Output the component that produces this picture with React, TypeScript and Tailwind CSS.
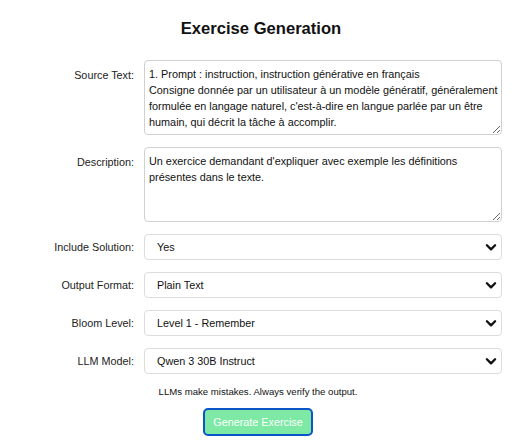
import React from "react";

const Chevron = () => (
  <svg
    className="pointer-events-none absolute right-[3px] top-1/2 -translate-y-1/2"
    width="14"
    height="14"
    viewBox="0 0 24 24"
    fill="none"
    stroke="#111"
    strokeWidth="4"
    strokeLinecap="round"
    strokeLinejoin="round"
  >
    <path d="M5 9l7 7 7-7" />
  </svg>
);

function SelectRow({ label, value }: { label: string; value: string }) {
  return (
    <div className="flex items-center">
      <label className="w-[134px] text-right text-[10.8px] text-[#222]">{label}</label>
      <div className="relative ml-[10px] h-[26px] w-[358px] rounded-[4px] border border-[#dcdcdc] bg-white">
        <div className="flex h-full items-center pl-[12px] text-[10.8px] text-[#111]">{value}</div>
        <Chevron />
      </div>
    </div>
  );
}

function TextRow({ label, value }: { label: string; value: string }) {
  return (
    <div className="flex items-start">
      <label className="w-[134px] pt-[7px] text-right text-[10.8px] text-[#222]">{label}</label>
      <textarea
        readOnly
        defaultValue={value}
        className="ml-[10px] h-[75px] w-[358px] resize-y overflow-hidden rounded-[4px] border border-[#d0d0d0] bg-white pb-[4px] pl-[4px] pr-[2px] pt-[5px] text-[10.85px] leading-[16px] text-[#111] outline-none"
        style={{ fontFamily: '"Liberation Sans", Arial, sans-serif' }}
      />
    </div>
  );
}

export default function App() {
  return (
    <div
      className="h-[444px] w-[528px] bg-white"
      style={{ fontFamily: '"Liberation Sans", Arial, sans-serif' }}
    >
      <div className="w-[522px] pt-[17px] text-center text-[16.6px] font-bold text-[#111]">
        Exercise Generation
      </div>
      <div className="mt-[18px] flex flex-col gap-[12px]">
        <TextRow
          label="Source Text:"
          value={
            "1. Prompt : instruction, instruction générative en français\nConsigne donnée par un utilisateur à un modèle génératif, généralement formulée en langage naturel, c'est-à-dire en langue parlée par un être humain, qui décrit la tâche à accomplir."
          }
        />
        <TextRow
          label="Description:"
          value={"Un exercice demandant d'expliquer avec exemple les définitions présentes dans le texte."}
        />
        <SelectRow label="Include Solution:" value="Yes" />
        <SelectRow label="Output Format:" value="Plain Text" />
        <SelectRow label="Bloom Level:" value="Level 1 - Remember" />
        <SelectRow label="LLM Model:" value="Qwen 3 30B Instruct" />
      </div>
      <div className="w-[516px] pt-[11px] text-center text-[9.6px] text-[#111]">
        LLMs make mistakes. Always verify the output.
      </div>
      <div className="flex w-[516px] justify-center pt-[9px]">
        <button className="h-[28px] w-[110px] rounded-[5px] border-2 border-[#0b55c8] bg-[#7de9a4] text-[10.8px] text-white">
          Generate Exercise
        </button>
      </div>
    </div>
  );
}
